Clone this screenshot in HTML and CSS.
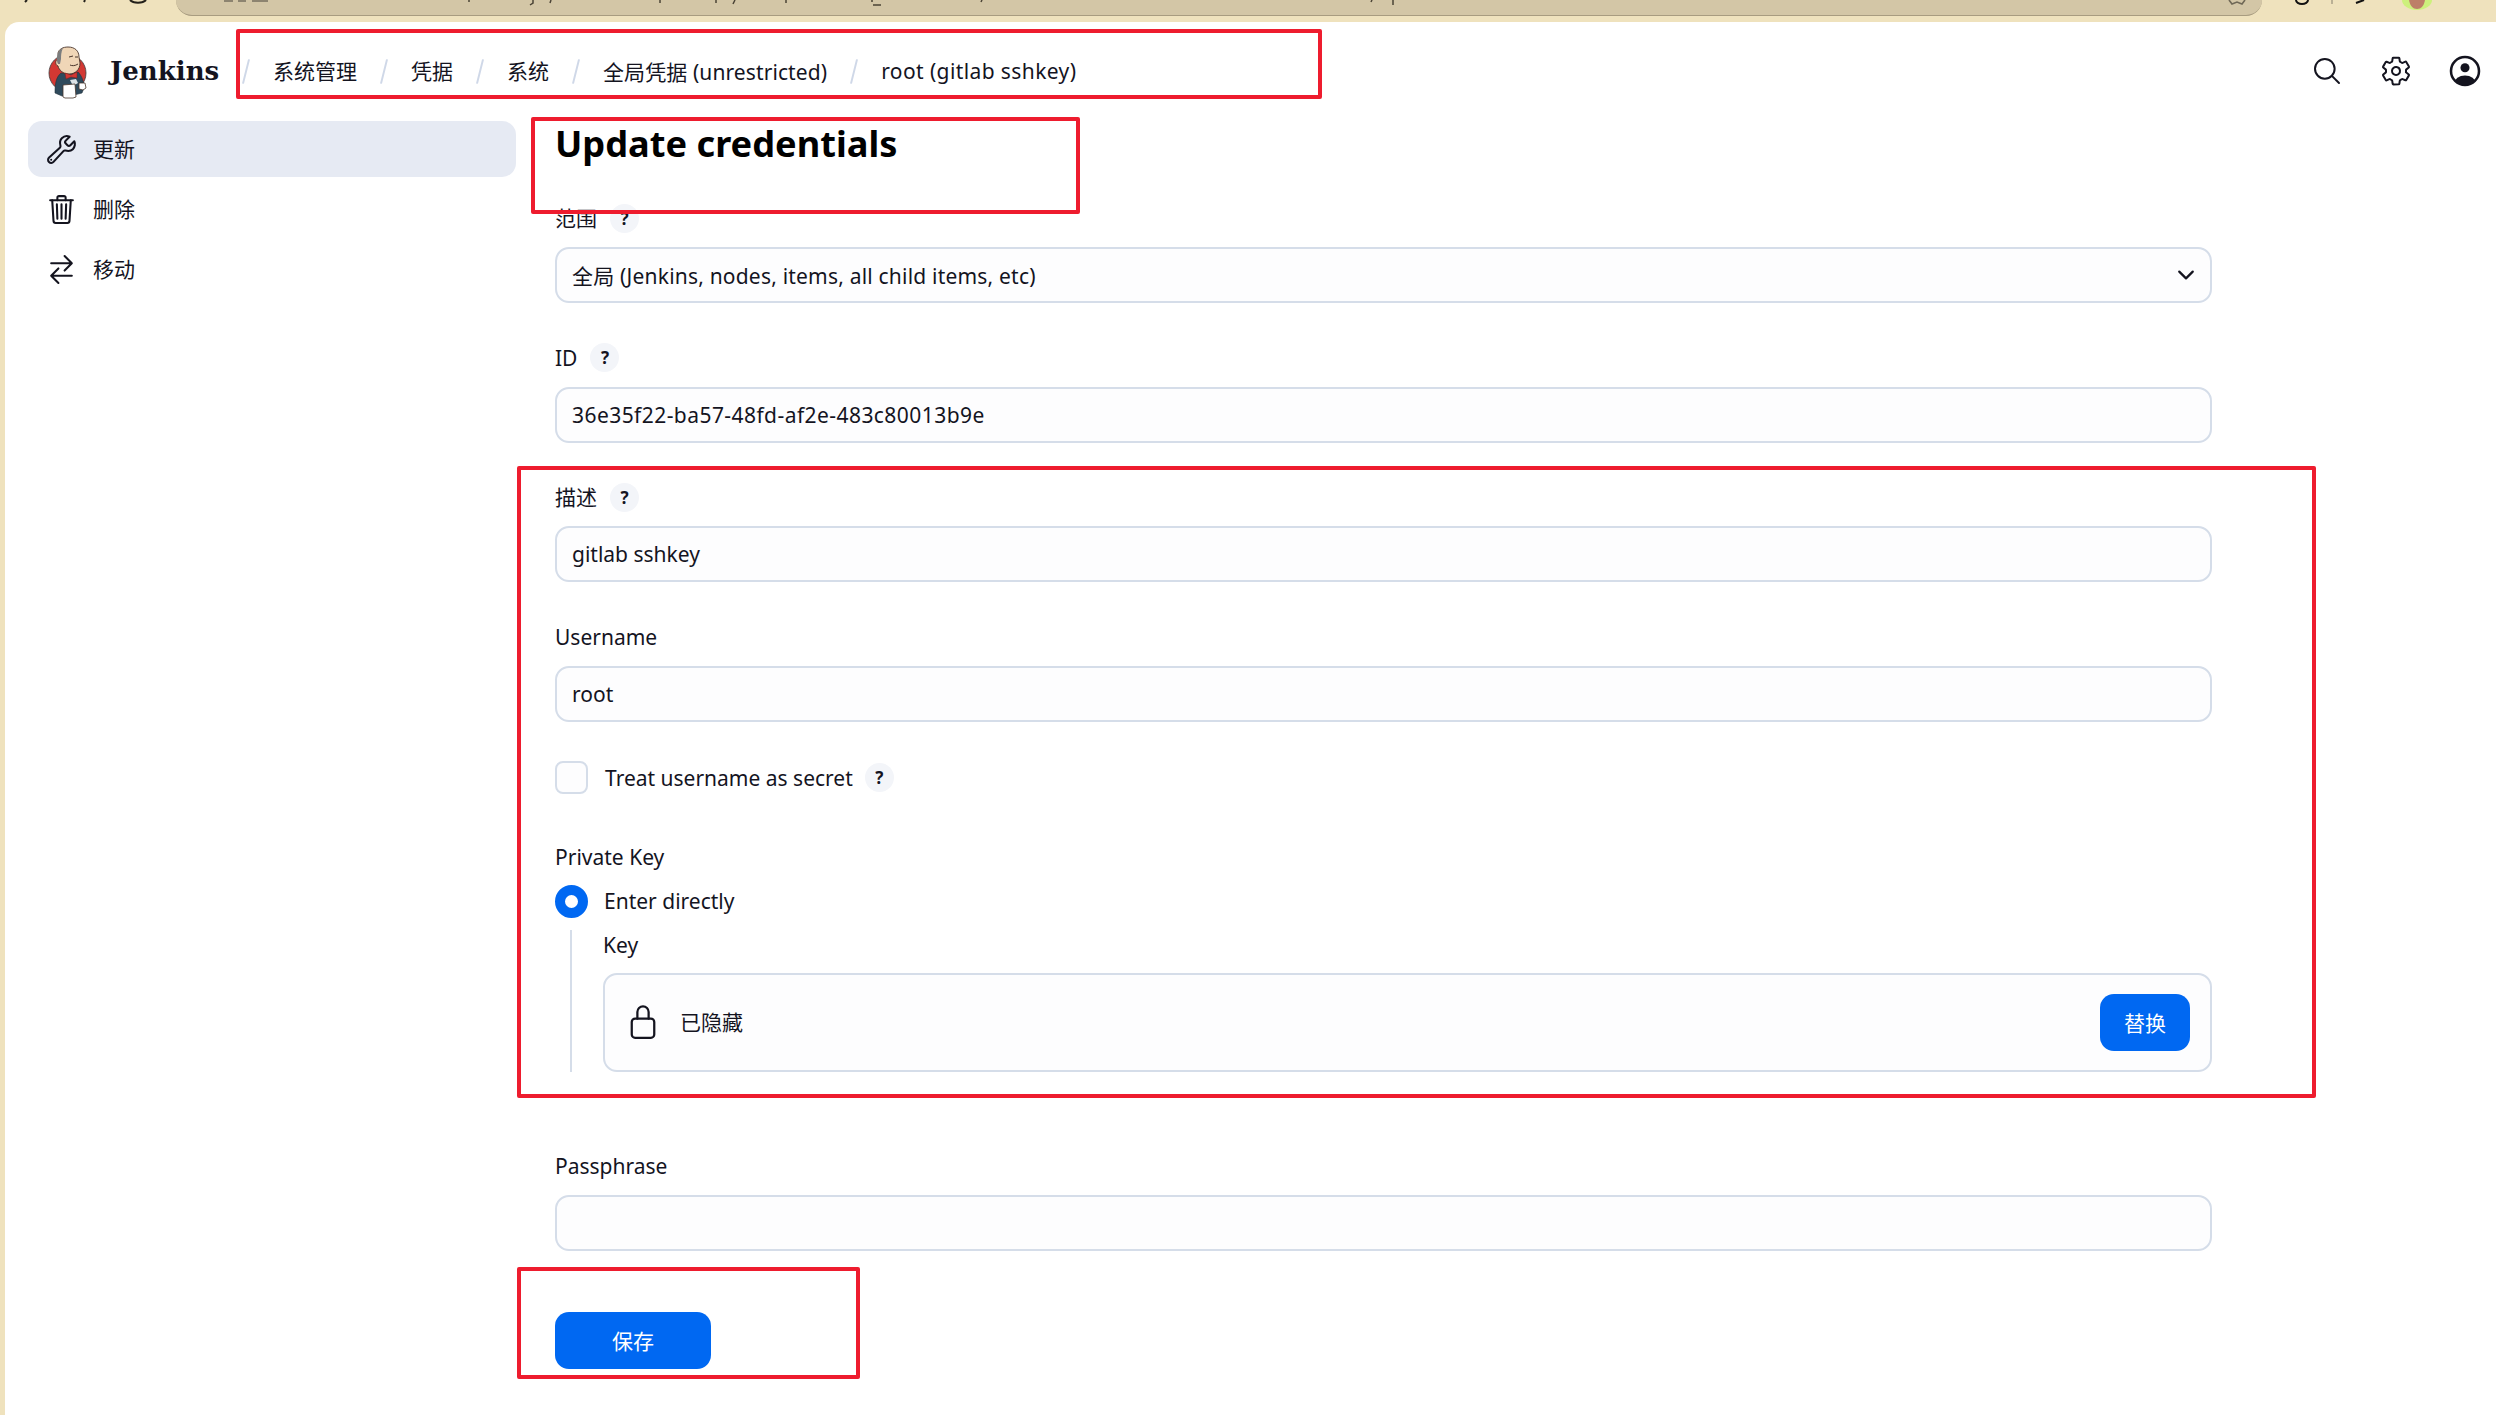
FILE: index.html
```html
<!DOCTYPE html>
<html lang="zh">
<head>
<meta charset="utf-8">
<title>Update credentials - Jenkins</title>
<link rel="stylesheet" href="styles.css">
</head>
<body>
<div class="browser-strip">
  <div class="address-bar"></div>
  <svg class="strip-bits" width="2496" height="22" viewBox="0 0 2496 22" fill="none" stroke="#23201a" stroke-width="2">
    <path d="M27 0l-2 2M85 0l-1 2"/>
    <path d="M130 0a9 5 0 0 0 16 0" stroke-width="2"/>
    <path d="M224 1h9M238 1h8M252 1h16" stroke="#8d8470" stroke-width="2"/>
    <path d="M469 0v2M533 0v3l-3 2M551 0l-1 3M660 0v3M716 0v3M735 0l-2 4M786 0v3M872 0v2M873 5h8M982 0l-1 2M1372 0l-1 2M1393 0v5" stroke="#4b4436" stroke-width="1.5"/>
    <path d="M2229 0l3 4 5-2 5 2 3-4" stroke="#6f6856" stroke-width="1.6"/>
    <path d="M2296 0a6 4 0 0 0 12 0" stroke="#111" stroke-width="2"/>
    <path d="M2332 0v4" stroke="#a89f88" stroke-width="1.5"/>
    <path d="M2356 3l8-3" stroke="#111" stroke-width="2"/>
    <path d="M2402 0a15 10 0 0 0 30 0z" fill="#cdf07c" stroke="none"/>
    <path d="M2409 0c1 6 4 9 8 9s7-3 8-9z" fill="#bd7f68" stroke="none"/>
  </svg>
</div>
<div class="panel">
  <header class="topbar">
    <svg class="logo" width="54" height="60" viewBox="40 40 54 60">
      <circle cx="67.5" cy="72" r="18.5" fill="#d33833" stroke="#3b3b3b" stroke-width=".8"/>
      <path d="M55 92c0-9 1-16 6-20l6 1 11-2c4 4 6 10 6 16l-2 5-8 2-12 1z" fill="#2f4a5c" stroke="#22303a" stroke-width=".6"/>
      <path d="M58 52c1-4 5-6 10-6 7 0 11 4 11 10 0 2 1 4 1 6 0 7-5 11-11 11-6 0-10-4-11-8-3-1-3-6 0-7z" fill="#f0d6b7" stroke="#49362c" stroke-width=".9"/>
      <path d="M58 63c-2-4-1-10 2-14l3-2c-2 4-2 8-2 11l-1 5z" fill="#7b7d7e"/>
      <path d="M69 56l4-1M75 56l3 0M70 64c2 1 5 1 8-1" stroke="#49362c" stroke-width="1" fill="none"/>
      <path d="M65 72l6 2 6-3 0 6-6-1-5 2z" fill="#d33833" stroke="#7a1f1c" stroke-width=".5"/>
      <path d="M70 79l6-1 2 4-5 3z" fill="#dbe2e6"/>
      <path d="M63 84l12-1 1 13-3 1h-8l-2-1z" fill="#fff" stroke="#49362c" stroke-width=".8"/>
      <path d="M79 82l6 0 1 5-3 2-4-1z" fill="#fff" stroke="#49362c" stroke-width=".8"/>
    </svg>
    <span class="brand">Jenkins</span>
    <nav class="crumbs">
      <i class="slash"></i><span class="cjk">系统管理</span>
      <i class="slash"></i><span class="cjk">凭据</span>
      <i class="slash"></i><span class="cjk">系统</span>
      <i class="slash"></i><span class="crumb-mixed">全局凭据 (unrestricted)</span>
      <i class="slash"></i><span class="crumb-last">root (gitlab sshkey)</span>
    </nav>
    <div class="top-actions">
      <svg class="top-icon" viewBox="0 0 512 512" fill="none" stroke="#14141f" stroke-width="32"><path d="M221.09 64a157.09 157.09 0 10157.09 157.09A157.1 157.1 0 00221.09 64z" stroke-miterlimit="10"/><path stroke-linecap="round" stroke-miterlimit="10" d="M338.29 338.29L448 448"/></svg>
      <svg class="top-icon" viewBox="0 0 512 512" fill="none" stroke="#14141f" stroke-width="32" stroke-linecap="round" stroke-linejoin="round"><path d="M262.29 192.31a64 64 0 1057.4 57.4 64.13 64.13 0 00-57.4-57.4zM416.39 256a154.34 154.34 0 01-1.53 20.79l45.21 35.46a10.81 10.81 0 012.45 13.75l-42.77 74a10.81 10.81 0 01-13.14 4.59l-44.9-18.08a16.11 16.11 0 00-15.17 1.75A164.48 164.48 0 01325 400.8a15.94 15.94 0 00-8.82 12.14l-6.73 47.89a11.08 11.08 0 01-10.68 9.17h-85.54a11.11 11.11 0 01-10.69-8.87l-6.72-47.82a16.07 16.07 0 00-9-12.22 155.3 155.3 0 01-21.46-12.57 16 16 0 00-15.11-1.71l-44.89 18.07a10.81 10.81 0 01-13.14-4.58l-42.77-74a10.8 10.8 0 012.45-13.75l38.21-30a16.05 16.05 0 006-14.08c-.36-4.17-.58-8.33-.58-12.5s.21-8.27.58-12.35a16 16 0 00-6.07-13.94l-38.19-30A10.81 10.81 0 0149.48 186l42.77-74a10.81 10.81 0 0113.14-4.59l44.9 18.08a16.11 16.11 0 0015.17-1.75A164.48 164.48 0 01187 111.2a15.94 15.94 0 008.82-12.14l6.73-47.89A11.08 11.08 0 01213.23 42h85.54a11.11 11.11 0 0110.69 8.87l6.72 47.82a16.07 16.07 0 009 12.22 155.3 155.3 0 0121.46 12.57 16 16 0 0015.11 1.71l44.89-18.07a10.81 10.81 0 0113.14 4.58l42.77 74a10.8 10.8 0 01-2.45 13.75l-38.21 30a16.05 16.05 0 00-6.05 14.08c.33 4.14.55 8.3.55 12.47z"/></svg>
      <svg class="top-icon" viewBox="0 0 24 24"><defs><clipPath id="user-clip"><circle cx="12" cy="12" r="10.5"/></clipPath></defs><circle cx="12" cy="12" r="10.5" fill="none" stroke="#14141f" stroke-width="1.9"/><circle cx="12" cy="9.6" r="3.4" fill="#14141f"/><ellipse cx="12" cy="21" rx="8" ry="5.6" fill="#14141f" clip-path="url(#user-clip)"/></svg>
    </div>
  </header>
  <div class="layout">
    <aside class="sidebar">
      <a class="side-item active">
        <svg class="side-icon" viewBox="0 0 512 512" fill="none" stroke="#14141f" stroke-width="32" stroke-linecap="round" stroke-linejoin="round"><path d="M393.87 190a32.1 32.1 0 01-45.25 0l-26.57-26.57a32.09 32.09 0 010-45.26L382.19 58a1 1 0 00-.3-1.64c-38.82-16.64-89.15-8.16-121.11 23.57-30.58 30.35-32.32 76-21.12 115.84a31.93 31.93 0 01-9.06 32.08L64 380a48.17 48.17 0 1068 68l153.86-167a31.93 31.93 0 0131.6-9.13c39.54 10.59 84.54 8.6 114.72-21.19 32.49-32 39.5-88.56 23.75-120.93a1 1 0 00-1.6-.26z"/><circle cx="96" cy="416" r="16" fill="#14141f" stroke="none"/></svg>
        <span class="cjk">更新</span>
      </a>
      <a class="side-item">
        <svg class="side-icon" viewBox="0 0 512 512" fill="none" stroke="#14141f" stroke-width="32" stroke-linecap="round" stroke-linejoin="round"><path d="M112 112l20 320c.95 18.49 14.4 32 32 32h184c17.67 0 30.87-13.51 32-32l20-320"/><path d="M80 112h352"/><path d="M192 112V72h0a23.93 23.93 0 0124-24h80a23.93 23.93 0 0124 24h0v40M256 176v224M184 176l8 224M328 176l-8 224"/></svg>
        <span class="cjk">删除</span>
      </a>
      <a class="side-item">
        <svg class="side-icon" viewBox="0 0 512 512" fill="none" stroke="#14141f" stroke-width="32" stroke-linecap="round" stroke-linejoin="round"><path d="M304 48l112 112-112 112M398.87 160H96M208 464L96 352l112-112M114 352h302"/></svg>
        <span class="cjk">移动</span>
      </a>
    </aside>
    <main class="content">
      <h1 class="title">Update credentials</h1>
      <div class="field">
        <div class="label-row"><span class="cjk">范围</span><span class="help">?</span></div>
        <div class="control select-control"><span class="scope-value">全局 (Jenkins, nodes, items, all child items, etc)</span>
          <svg class="chevron" viewBox="0 0 512 512" fill="none" stroke="#14141f" stroke-width="48" stroke-linecap="round" stroke-linejoin="round"><path d="M112 184l144 144 144-144"/></svg>
        </div>
      </div>
      <div class="field">
        <div class="label-row"><span>ID</span><span class="help">?</span></div>
        <div class="control id-value">36e35f22-ba57-48fd-af2e-483c80013b9e</div>
      </div>
      <div class="field">
        <div class="label-row"><span class="cjk">描述</span><span class="help">?</span></div>
        <div class="control">gitlab sshkey</div>
      </div>
      <div class="field">
        <div class="label-row"><span>Username</span></div>
        <div class="control">root</div>
      </div>
      <div class="check-row"><span class="checkbox"></span><span>Treat username as secret</span><span class="help">?</span></div>
      <div class="label-row private-label"><span>Private Key</span></div>
      <div class="radio-row"><span class="radio"></span><span>Enter directly</span></div>
      <div class="nested">
        <div class="label-row"><span>Key</span></div>
        <div class="secret-box">
          <div class="secret-left">
            <svg class="lock" viewBox="0 0 512 512" fill="none" stroke="#14141f" stroke-width="32" stroke-linecap="round" stroke-linejoin="round"><path d="M336 208v-95a80 80 0 00-160 0v95"/><rect x="96" y="208" width="320" height="272" rx="48" ry="48"/></svg>
            <span class="cjk">已隐藏</span>
          </div>
          <button class="btn btn-replace">替换</button>
        </div>
      </div>
      <div class="field passphrase">
        <div class="label-row"><span>Passphrase</span></div>
        <div class="control"></div>
      </div>
      <button class="btn btn-save">保存</button>
    </main>
  </div>
</div>
<div class="mark mark-crumbs"></div>
<div class="mark mark-title"></div>
<div class="mark mark-form"></div>
<div class="mark mark-save"></div>
</body>
</html>
```
FILE: styles.css
```css
* { box-sizing: border-box; }
html, body { margin: 0; padding: 0; }
body {
  width: 2496px;
  height: 1415px;
  overflow: hidden;
  position: relative;
  background: #efe2bd;
  color: #14141f;
  font-family: "Noto Sans", "Noto Sans CJK SC", sans-serif;
  font-size: 21px;
}
.cjk { margin-top: -2px; }
.browser-strip { height: 22px; position: relative; }
.address-bar {
  margin-left: 176px;
  width: 2086px;
  height: 16px;
  background: #d3c6a6;
  border-bottom: 1px solid #a89c80;
  border-radius: 0 0 20px 20px;
}
.strip-bits { position: absolute; left: 0; top: 0; }

.panel {
  margin-left: 5px;
  height: 1393px;
  background: #fff;
  border-top-left-radius: 14px;
}
.topbar {
  height: 99px;
  padding: 0 15px 1px 35px;
  display: flex;
  align-items: center;
}
.logo { flex: none; }
.brand {
  margin-left: 16px;
  font-family: "DejaVu Serif", serif;
  font-weight: 700;
  font-size: 26px;
  width: 133px;
}
.crumbs { display: flex; align-items: center; gap: 24px; }
.crumb-mixed { letter-spacing: .1px; margin-top: -1px; }
.crumb-last { letter-spacing: .4px; margin-top: -1px; }
.slash {
  width: 2px;
  height: 25px;
  margin: 0 2px;
  background: #cfd8e8;
  transform: rotate(14deg);
}
.top-actions { margin-left: auto; display: flex; gap: 37px; }
.top-icon { width: 32px; height: 32px; display: block; }

.layout {
  padding-left: 23px;
  display: grid;
  grid-template-columns: 488px 1657px;
  column-gap: 39px;
}
.sidebar { display: flex; flex-direction: column; gap: 4px; }
.side-item {
  height: 56px;
  padding-left: 17px;
  display: flex;
  align-items: center;
  gap: 15px;
  border-radius: 14px;
}
.side-item.active { background: #e6eaf3; }
.side-icon { width: 33px; height: 33px; flex: none; }

.title {
  margin: 0 0 39px;
  height: 44px;
  line-height: 44px;
  font-size: 36.2px;
  font-weight: 700;
  color: #000;
}
.field { margin-bottom: 40.5px; }
.label-row {
  height: 28px;
  margin-bottom: 15px;
  display: flex;
  align-items: center;
  gap: 13px;
}
.help {
  width: 29px;
  height: 29px;
  flex: none;
  border-radius: 50%;
  background: #f3f5f9;
  display: flex;
  align-items: center;
  justify-content: center;
  font-size: 17px;
  font-weight: 700;
}
.control {
  height: 56px;
  padding: 0 12px 0 15px;
  border: 2px solid #d5dde9;
  border-radius: 14px;
  background: #fdfdfe;
  display: flex;
  align-items: center;
  justify-content: space-between;
}
.scope-value { letter-spacing: .2px; margin-top: -1px; }
.id-value { letter-spacing: .44px; }
.chevron { width: 24px; height: 24px; }
.check-row {
  height: 32px;
  margin-top: -.5px;
  display: flex;
  align-items: center;
}
.checkbox {
  width: 33px;
  height: 33px;
  margin-right: 17px;
  border: 2px solid #d5dde9;
  border-radius: 8px;
  background: #fdfdfe;
}
.check-row .help { margin-left: 12px; }
.private-label { margin: 49px 0 14px; }
.radio-row {
  height: 33px;
  display: flex;
  align-items: center;
  gap: 16px;
}
.radio {
  width: 33px;
  height: 33px;
  border-radius: 50%;
  border: 10px solid #0068f2;
  background: #fff;
}
.nested {
  margin: 12px 0 0 15px;
  padding: 1px 0 0 31px;
  border-left: 2px solid #d5dde9;
}
.nested .label-row { margin-bottom: 14px; }
.secret-box {
  height: 99px;
  padding: 0 20px;
  border: 2px solid #d5dde9;
  border-radius: 14px;
  background: #fdfdfe;
  display: flex;
  align-items: center;
  justify-content: space-between;
}
.secret-left { display: flex; align-items: center; gap: 19px; }
.lock { width: 36px; height: 36px; }
.btn {
  height: 57px;
  border: 0;
  border-radius: 14px;
  background: #0068f2;
  color: #fff;
  font: inherit;
  padding: 0 0 1px;
}
.btn-replace { width: 90px; }
.btn-save { width: 156px; display: block; }
.passphrase { margin: 80px 0 61px; }

.mark {
  position: absolute;
  border: 4px solid #ee1c2e;
  border-radius: 2px;
}
.mark-crumbs { left: 236px; top: 29px; width: 1086px; height: 70px; }
.mark-title { left: 531px; top: 117px; width: 549px; height: 97px; }
.mark-form { left: 517px; top: 466px; width: 1799px; height: 632px; }
.mark-save { left: 517px; top: 1267px; width: 343px; height: 112px; }
```
